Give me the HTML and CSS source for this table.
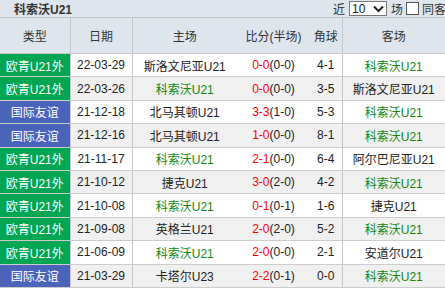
FILE: index.html
```html
<!DOCTYPE html>
<html lang="zh">
<head>
<meta charset="utf-8">
<link rel="stylesheet" href="styles.css">
</head>
<body>
<div class="panel">
  <div class="titlebar">
    <span class="team">科索沃U21</span>
    <div class="controls">
      <span>近</span>
      <span class="select"><span>10</span><svg width="11" height="8" viewBox="0 0 11 8"><path d="M1 1.5 L5.5 6 L10 1.5" fill="none" stroke="#222" stroke-width="2"/></svg></span>
      <span>场</span>
      <span class="check"></span>
      <span>同客</span>
    </div>
  </div>
  <table class="grid">
    <colgroup>
      <col class="c-type"><col class="c-date"><col class="c-home"><col class="c-score"><col class="c-corner"><col class="c-away">
    </colgroup>
    <thead>
      <tr>
        <th class="sep">类型</th><th class="sep">日期</th><th>主场</th><th>比分(半场)</th><th>角球</th><th class="away">客场</th>
      </tr>
    </thead>
    <tbody>
      <tr><td class="type euro sep">欧青U21外</td><td class="sep">22-03-29</td><td>斯洛文尼亚U21</td><td><span class="red">0-0</span>(0-0)</td><td>4-1</td><td class="away green">科索沃U21</td></tr>
      <tr class="alt"><td class="type euro sep">欧青U21外</td><td class="sep">22-03-26</td><td class="green">科索沃U21</td><td><span class="red">0-0</span>(0-0)</td><td>3-5</td><td class="away">斯洛文尼亚U21</td></tr>
      <tr><td class="type friendly sep">国际友谊</td><td class="sep">21-12-18</td><td>北马其顿U21</td><td><span class="red">3-3</span>(1-0)</td><td>5-3</td><td class="away green">科索沃U21</td></tr>
      <tr class="alt"><td class="type friendly sep">国际友谊</td><td class="sep">21-12-16</td><td>北马其顿U21</td><td><span class="red">1-0</span>(0-0)</td><td>8-1</td><td class="away green">科索沃U21</td></tr>
      <tr><td class="type euro sep">欧青U21外</td><td class="sep">21-11-17</td><td class="green">科索沃U21</td><td><span class="red">2-1</span>(0-0)</td><td>6-4</td><td class="away">阿尔巴尼亚U21</td></tr>
      <tr class="alt"><td class="type euro sep">欧青U21外</td><td class="sep">21-10-12</td><td>捷克U21</td><td><span class="red">3-0</span>(2-0)</td><td>4-2</td><td class="away green">科索沃U21</td></tr>
      <tr><td class="type euro sep">欧青U21外</td><td class="sep">21-10-08</td><td class="green">科索沃U21</td><td><span class="red">0-1</span>(0-1)</td><td>1-6</td><td class="away">捷克U21</td></tr>
      <tr class="alt"><td class="type euro sep">欧青U21外</td><td class="sep">21-09-08</td><td>英格兰U21</td><td><span class="red">2-0</span>(2-0)</td><td>5-2</td><td class="away green">科索沃U21</td></tr>
      <tr><td class="type euro sep">欧青U21外</td><td class="sep">21-06-09</td><td class="green">科索沃U21</td><td><span class="red">2-0</span>(0-0)</td><td>2-1</td><td class="away">安道尔U21</td></tr>
      <tr class="alt"><td class="type friendly sep">国际友谊</td><td class="sep">21-03-29</td><td>卡塔尔U23</td><td><span class="red">2-2</span>(0-1)</td><td>0-0</td><td class="away green">科索沃U21</td></tr>
    </tbody>
  </table>
</div>
</body>
</html>
```

FILE: styles.css
```css
html, body {
  margin: 0;
  padding: 0;
  background: #ffffff;
}
body {
  font-family: "Liberation Sans", "Noto Sans CJK SC", sans-serif;
  font-size: 12px;
  color: #333333;
  width: 445px;
  overflow: hidden;
}
.panel {
  width: 445px;
}
.titlebar {
  height: 17px;
  background: #dfe5ec;
  border-bottom: 1px solid #c4c8cc;
  display: flex;
  align-items: center;
  justify-content: space-between;
  padding-left: 14px;
  box-sizing: content-box;
}
.team {
  font-weight: bold;
  font-size: 12px;
  color: #333;
}
.controls {
  display: flex;
  align-items: center;
  gap: 3px;
  font-size: 12px;
  color: #333;
  margin-right: -1px;
}
.select {
  display: inline-flex;
  align-items: center;
  justify-content: space-between;
  width: 32px;
  height: 13px;
  border: 1px solid #777;
  background: #fff;
  padding: 0 2px 0 2px;
  font-size: 12px;
  color: #222;
  box-sizing: content-box;
  margin: 0 1px;
}
.check {
  width: 11px;
  height: 11px;
  border: 1px solid #555;
  background: #fff;
  display: inline-block;
}
.grid {
  width: 445px;
  border-collapse: collapse;
  table-layout: fixed;
}
.c-type { width: 70px; }
.c-date { width: 62px; }
.c-home { width: 105px; }
.c-score { width: 73px; }
.c-corner { width: 32px; }
.c-away { width: 103px; }
th {
  height: 35px;
  padding: 0;
  background: #dfe5ec;
  font-weight: normal;
  color: #333;
  border-bottom: 1px solid #c4c8cc;
  text-align: center;
}
td {
  height: 22.4px;
  padding: 0;
  text-align: center;
  border-bottom: 1px solid #cccccc;
  color: #222;
  white-space: nowrap;
}
.sep {
  border-right: 1px solid #c4c8cc;
}
.away {
  border-left: 1px solid #c4c8cc;
}
tr.alt td {
  background: #f0f0f0;
}
td.type {
  color: #ffffff;
}
tr td.euro, tr.alt td.euro {
  background: #00a651;
}
tr td.friendly, tr.alt td.friendly {
  background: #4a64bb;
}
.green {
  color: #118811;
}
td.green {
  color: #118811;
}
.red {
  color: #ff0000;
}
```
